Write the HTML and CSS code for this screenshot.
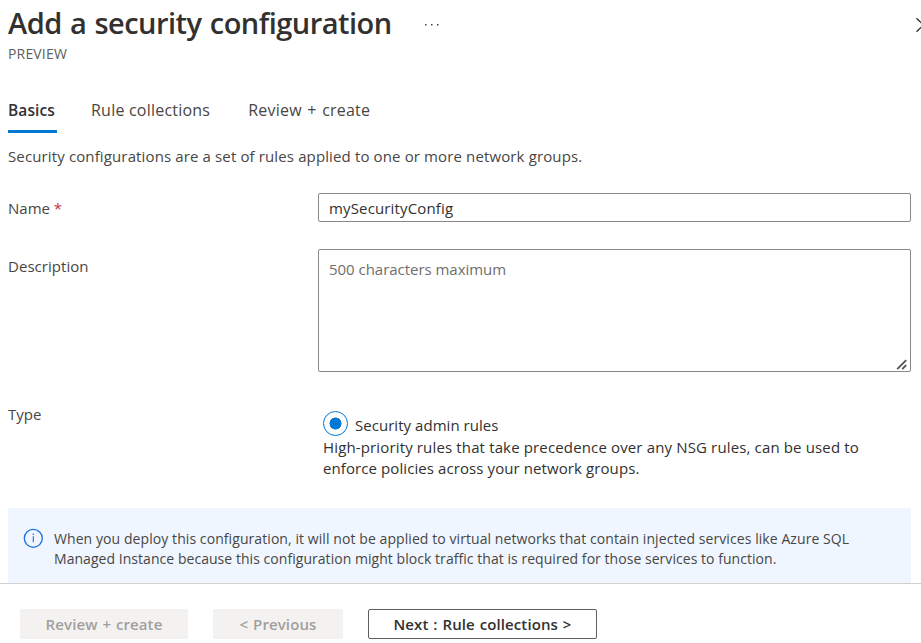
FILE: index.html
```html
<!DOCTYPE html>
<html lang="en">
<head>
<meta charset="utf-8">
<title>Add a security configuration</title>
<link rel="stylesheet" href="styles.css">
</head>
<body>
<div class="blade">
  <header class="header">
    <div class="title-row">
      <h1 class="title">Add a security configuration</h1>
      <svg class="more" width="16" height="4" viewBox="0 0 16 4"><path d="M1 1h1.5v1.5H1zM7 1h1.5v1.5H7zM13 1h1.5v1.5H13z" fill="#444"/></svg>
      <svg class="close" width="5" height="16" viewBox="0 0 5 16"><path d="M.5 1.2 7.3 8 .5 14.8" fill="none" stroke="#323130" stroke-width="1.3"/></svg>
    </div>
    <div class="subtitle">PREVIEW</div>
  </header>
  <nav class="tabs">
    <a class="tab active">Basics</a>
    <a class="tab">Rule collections</a>
    <a class="tab review">Review + create</a>
  </nav>
  <main class="content">
    <p class="intro">Security configurations are a set of rules applied to one or more network groups.</p>
    <form class="form">
      <label class="label name-label" for="name">Name <span class="required">*</span></label>
      <input class="field input" id="name" type="text" value="mySecurityConfig" spellcheck="false">
      <label class="label desc-label" for="desc">Description</label>
      <div class="area-wrap">
        <textarea class="field area" id="desc" placeholder="500 characters maximum"></textarea>
        <svg class="grip" width="12" height="12" viewBox="0 0 12 12"><path d="M1.2 10.2 10.2 1.2M6.2 10.2 10.2 6.2" fill="none" stroke="#555" stroke-width="1.9"/></svg>
      </div>
      <span class="label type-label">Type</span>
      <div class="choice">
        <div class="option"><span class="radio"></span><span class="option-text">Security admin rules</span></div>
        <div class="help"><div class="help-first">High-priority rules that take precedence over any NSG rules, can be used to</div><div class="help-second">enforce policies across your network groups.</div></div>
      </div>
    </form>
    <div class="info">
      <svg class="info-icon" width="20" height="20" viewBox="0 0 20 20"><circle cx="10.3" cy="10.3" r="9" fill="none" stroke="#1b6fe0" stroke-width="1.3"/><path d="M10.3 8.3v6" stroke="#1b6fe0" stroke-width="1.1"/><circle cx="10.3" cy="6.2" r=".8" fill="#1b6fe0"/></svg>
      <div class="info-text"><div class="info-first">When you deploy this configuration, it will not be applied to virtual networks that contain injected services like Azure SQL</div><div class="info-second">Managed Instance because this configuration might block traffic that is required for those services to function.</div></div>
    </div>
  </main>
  <footer class="footer">
    <button class="btn create" disabled>Review + create</button>
    <button class="btn previous" disabled>&lt; Previous</button>
    <button class="btn next">Next : Rule collections &gt;</button>
  </footer>
</div>
</body>
</html>
```
FILE: styles.css
```css
* { box-sizing: border-box; }
body {
  margin: 0;
  background: #fff;
  color: #323130;
  font: 15px/20px "Open Sans", "Noto Sans", sans-serif;
  overflow: hidden;
}
.blade { display: flex; flex-direction: column; height: 643px; }
.header { height: 84px; padding-left: 8px; }
.title-row { display: flex; align-items: center; height: 46px; }
.title {
  margin: 0;
  font-size: 29px;
  line-height: 46px;
  font-weight: 600;
  letter-spacing: -0.52px;
  word-spacing: 1.2px;
  white-space: nowrap;
}
.more { margin-left: 32px; margin-top: 3px; }
.close { margin-left: auto; margin-top: 4px; }
.subtitle { font-size: 14px; line-height: 16px; letter-spacing: 0.17px; color: #605e5c; }
.tabs { display: flex; height: 49px; padding-left: 8px; }
.tab {
  height: 49px;
  padding-top: 16px;
  font-size: 16px;
  line-height: 20px;
  letter-spacing: 0.22px;
  color: #484644;
  white-space: nowrap;
}
.tab.active {
  width: 49px;
  margin-right: 34px;
  border-bottom: 3px solid #0078d4;
  font-weight: 600;
  font-size: 15.5px;
  letter-spacing: 0.12px;
  color: #323130;
}
.tab.review { margin-left: 38px; letter-spacing: 0.22px; word-spacing: 1.1px; }
.content { flex: 1; display: flex; flex-direction: column; padding: 0 10px 0 8px; }
.intro { margin: 12px 0 0; height: 48px; line-height: 22px; letter-spacing: 0.13px; color: #484644; }
.form {
  display: grid;
  grid-template-columns: 310px 593px;
  grid-template-rows: 56px 162px 97px;
}
.label { color: #484644; }
.name-label { padding-top: 5px; }
.desc-label { padding-top: 7px; letter-spacing: 0.04px; }
.type-label { margin-top: -7px; }
.required { color: #c4314b; }
.field {
  display: block;
  width: 593px;
  margin: 0;
  border: 1px solid #8a8886;
  border-radius: 2px;
  background: #fff;
  color: #323130;
  font: inherit;
  outline: none;
}
.input { height: 29px; padding: 1px 10px 0; letter-spacing: 0.15px; }
.area-wrap { position: relative; height: 123px; }
.area { height: 123px; padding: 9px 10px; resize: none; letter-spacing: -0.03px; }
.area::placeholder { color: #706e6c; opacity: 1; }
.grip { position: absolute; right: 3px; bottom: 1px; }
.choice { padding-left: 5px; }
.option { display: flex; height: 26px; }
.radio {
  width: 25px;
  height: 25px;
  margin-right: 7px;
  border: 1px solid #0078d4;
  border-radius: 50%;
  background: radial-gradient(circle, #0078d4 5.7px, transparent 6.3px);
}
.option-text { padding-top: 4px; letter-spacing: 0.04px; }
.help { line-height: 21px; white-space: nowrap; }
.help-first { letter-spacing: 0.145px; }
.help-second { letter-spacing: 0.09px; }
.info {
  display: flex;
  flex: 1;
  padding: 20px 15px 0;
  background: #eff6ff;
  color: #484644;
}
.info-icon { flex: none; margin-right: 11px; }
.info-text { padding-top: 1px; font-size: 14px; line-height: 20px; white-space: nowrap; }
.info-first { letter-spacing: 0.076px; }
.info-second { letter-spacing: 0.045px; }
.footer {
  display: flex;
  height: 60px;
  padding: 25px 0 0 20px;
  gap: 25px;
  border-top: 1px solid #d2d0ce;
}
.btn {
  height: 30px;
  padding: 0;
  border: 1px solid #605e5c;
  border-radius: 2px;
  background: #fff;
  color: #323130;
  font: 600 15px/28px "Open Sans", "Noto Sans", sans-serif;
  letter-spacing: 0.1px;
  word-spacing: 0.9px;
  white-space: nowrap;
}
.btn:disabled { border-color: #f3f2f1; background: #f3f2f1; color: #a19f9d; }
.create { width: 168px; }
.previous { width: 130px; }
.next { width: 229px; }
```
